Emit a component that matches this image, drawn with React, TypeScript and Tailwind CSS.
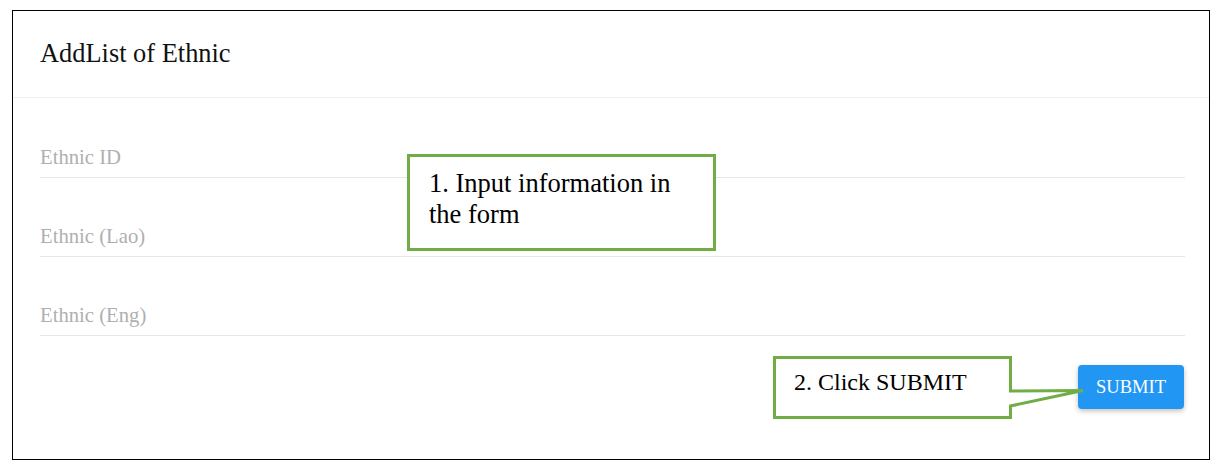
import React from "react";

export default function App() {
  return (
    <div className="relative w-[1219px] h-[470px] bg-white overflow-hidden font-['Liberation_Serif','Times_New_Roman',serif]">
      <div className="pt-[10px] pl-[12px]">
        <div className="w-[1198px] h-[450px] border border-black flex flex-col">
          <div className="h-[87px] border-b border-[#eeeeee] flex items-center pl-[27px]">
            <h1 className="text-[26.4px] text-[#111]">AddList of Ethnic</h1>
          </div>
          <div className="pt-px pl-[27px] pr-[24px] flex flex-col">
            {["Ethnic ID", "Ethnic (Lao)", "Ethnic (Eng)"].map((p) => (
              <div key={p} className="h-[79px] border-b border-[#e6e6e6] flex items-end">
                <input
                  placeholder={p}
                  className="w-full h-[30px] mb-[4px] outline-none bg-transparent font-['Liberation_Serif','Times_New_Roman',serif] text-[20.7px] text-[#333] placeholder:text-[#b0b0b0]"
                />
              </div>
            ))}
            <div className="flex justify-end mt-[29px] mr-px">
              <button className="w-[106px] h-[44px] bg-[#2196f3] rounded-[4px] text-white font-['Liberation_Serif','Times_New_Roman',serif] text-[18.5px] pt-[2px] shadow-[0_2px_5px_rgba(0,0,0,0.25)]">
                SUBMIT
              </button>
            </div>
          </div>
        </div>
      </div>

      {/* Annotation 1 */}
      <div className="absolute left-[407px] top-[154px] w-[309px] h-[97px] border-[3px] border-[#70ad47] bg-white pl-[19px] pt-[11px] text-[26.5px] leading-[31px] text-black">
        1. Input information in
        <br />
        the form
      </div>

      {/* Annotation 2 */}
      <svg className="absolute left-0 top-0 pointer-events-none" width="1219" height="470">
        <path
          d="M774.5 357.5 L1010.5 357.5 L1010.5 391 L1083 390.5 L1010.5 406 L1010.5 417.5 L774.5 417.5 Z"
          fill="white"
          stroke="#70ad47"
          strokeWidth="3"
          strokeLinejoin="miter"
        />
      </svg>
      <div className="absolute left-[794px] top-[368px] text-[24px] leading-[28px] text-black">2. Click SUBMIT</div>
    </div>
  );
}
